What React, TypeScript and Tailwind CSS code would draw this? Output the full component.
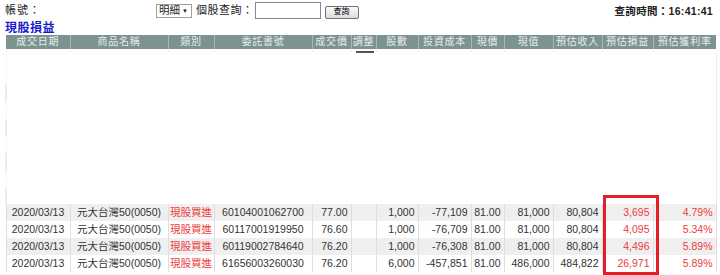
import React from 'react';

const cols = [64, 98, 46, 98, 39, 25, 42, 53, 33, 49, 49, 51, 63];
const heads = ['成交日期', '商品名稱', '類別', '委託書號', '成交價', '調整', '股數', '投資成本', '現價', '現值', '預估收入', '預估損益', '預估獲利率'];

const rows = [
  ['2020/03/13', '元大台灣50(0050)', '現股買進', '60104001062700', '77.00', '', '1,000', '-77,109', '81.00', '81,000', '80,804', '3,695', '4.79%'],
  ['2020/03/13', '元大台灣50(0050)', '現股買進', '60117001919950', '76.60', '', '1,000', '-76,709', '81.00', '81,000', '80,804', '4,095', '5.34%'],
  ['2020/03/13', '元大台灣50(0050)', '現股買進', '60119002784640', '76.20', '', '1,000', '-76,308', '81.00', '81,000', '80,804', '4,496', '5.89%'],
  ['2020/03/13', '元大台灣50(0050)', '現股買進', '61656003260030', '76.20', '', '6,000', '-457,851', '81.00', '486,000', '484,822', '26,971', '5.89%'],
];

const font = { fontFamily: '"Liberation Sans", Arial, "Noto Sans CJK TC", sans-serif' };

const App: React.FC = () => {
  return (
    <div className="relative w-[720px] h-[275px] bg-white text-[10.5px] text-[#333] overflow-hidden" style={font}>
      {/* Top bar */}
      <div className="flex items-center h-[21px] pl-[5px] pr-[7px] text-[11px] text-[#222]">
        <span className="w-[151px] tracking-[1px]">帳號：</span>
        <div className="flex items-center justify-between h-[14px] w-[36px] border border-[#a0a0a0] pl-[2px] pr-[3px] text-[10.5px] leading-none whitespace-nowrap">
          <span>明細</span>
          <span className="text-[6px]">▼</span>
        </div>
        <span className="ml-[4px] tracking-[0.5px] whitespace-nowrap">個股查詢：</span>
        <div className="ml-[1px] w-[66px] h-[17px] border border-[#8a8a8a] bg-white" />
        <button className="ml-[4px] mt-[3px] h-[13px] w-[34px] border border-[#707070] rounded-[2px] bg-gradient-to-b from-[#fbfbfb] to-[#dcdcdc] text-[8px] leading-none text-black whitespace-nowrap">
          查詢
        </button>
        <span className="ml-auto font-bold text-[10.5px] pt-[3px] tracking-[0.3px] whitespace-nowrap">查詢時間：16:41:41</span>
      </div>

      {/* Title */}
      <div className="pl-[5px] h-[14px] leading-[14px] text-[12px] font-bold tracking-[0.5px] text-[#1a1acc]">現股損益</div>

      {/* Table */}
      <table className="ml-[5px] table-fixed border-collapse w-[710px]">
        <colgroup>
          {cols.map((w, i) => (
            <col key={i} style={{ width: w }} />
          ))}
        </colgroup>
        <thead>
          <tr className="h-[14px] bg-[#7d9392]">
            {heads.map((h, i) => (
              <th
                key={i}
                className="relative p-0 font-normal text-[10px] tracking-[0.8px] leading-[14px] text-[#e6ecec] border-l border-[#a8b7b7] first:border-l-0 whitespace-nowrap overflow-visible"
              >
                {h}
                {h === '調整' && (
                  <span className="absolute left-[4px] top-[16px] w-[18px] h-[2px] bg-[#555]" />
                )}
              </th>
            ))}
          </tr>
        </thead>
        <tbody>
          <tr className="h-[3px]">
            {cols.map((_, i) => (
              <td key={i} className="p-0 border-l border-[#efefef]" />
            ))}
          </tr>
          {Array.from({ length: 9 }).map((_, r) => (
            <tr key={r} className={r === 0 ? 'h-[16px]' : 'h-[17px]'}>
              <td
                colSpan={13}
                className={
                  'p-0 border-r border-[#ececec] ' +
                  (r % 2 === 0 && r > 0 ? 'border-l-2 border-l-[#ececec]' : 'border-l border-l-[#f6f6f6]')
                }
              />
            </tr>
          ))}
          {rows.map((row, r) => (
            <tr key={r} className={'h-[17px] ' + (r % 2 === 0 ? 'bg-[#efefef]' : 'bg-white')}>
              {row.map((c, i) => {
                const center = i <= 3;
                const red = i === 2 || i >= 11;
                return (
                  <td
                    key={i}
                    className={
                      'p-0 leading-[17px] whitespace-nowrap border-l border-[#dedede] ' +
                      (i === 12 ? 'border-r ' : '') +
                      (center ? 'text-center ' : 'text-right pr-[3px] ') +
                      (red ? 'text-[#ee3b3b]' : 'text-[#333]')
                    }
                  >
                    {c}
                  </td>
                );
              })}
            </tr>
          ))}
        </tbody>
      </table>

      {/* Annotation box */}
      <div className="absolute left-[603px] top-[195px] w-[56px] h-[80px] border-[3px] border-[#e41e26]" />
    </div>
  );
};

export default App;
